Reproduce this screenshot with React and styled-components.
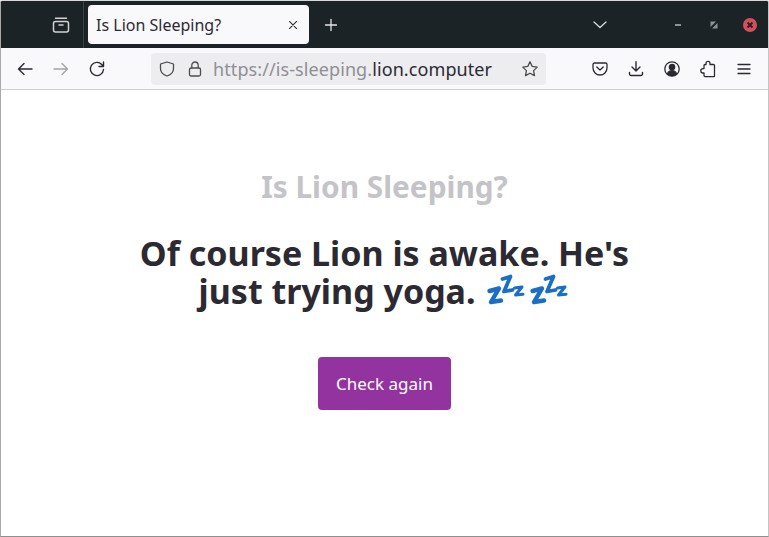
import React from "react";
import styled, { createGlobalStyle } from "styled-components";

const Global = createGlobalStyle`
  html, body { margin: 0; padding: 0; background: #fff; }
  body { font-family: "Noto Sans", "Open Sans", sans-serif; }
`;

const Win = styled.div`
  width: 769px; height: 537px; box-sizing: border-box; overflow: hidden;
  display: flex; flex-direction: column; background: #fff;
  border: 1px solid #a9a9a9; border-top-color: #d8d8d8; border-right-color: #c4c4c4; border-bottom-color: #8f8f8f;
  border-radius: 2px 2px 0 0;
`;
const TabBar = styled.div`
  height: 47px; flex: none; background: #1c2326; display: flex; align-items: center; color: #fbfbfe;
`;
const ArchiveSlot = styled.div`
  width: 83px; height: 100%; box-sizing: border-box; border-right: 1px solid #3b4245;
  display: flex; align-items: center; justify-content: flex-end; padding-right: 13px; flex: none; color: #d0d2d3;
`;
const Tab = styled.div`
  margin-left: 4px; width: 221px; height: 39px; background: #f9f9fb; border-radius: 4px; flex: none;
  display: flex; align-items: center; justify-content: space-between; box-sizing: border-box;
  padding: 0 8px; color: #2b2a33; font-size: 16px;
`;
const TabTitle = styled.span` line-height: 22px; `;
const TabClose = styled.span` display: flex; color: #2b2a33; `;
const PlusSlot = styled.div` margin-left: 13px; display: flex; color: #e4e5e6; `;
const ListAll = styled.div` margin-left: 251px; display: flex; color: #d7d9da; `;
const WinControls = styled.div` margin-left: 61px; display: flex; gap: 20px; align-items: center; `;
const WinBtn = styled.div` width: 16px; height: 16px; display: flex; align-items: center; justify-content: center; `;

const ToolBar = styled.div`
  height: 42px; flex: none; box-sizing: border-box; background: #f9f9fb; border-bottom: 1px solid #cfcfd1;
  display: flex; align-items: center; padding: 0 6px; color: #2b2a33;
`;
const ToolBtn = styled.div`
  width: 36px; height: 32px; display: flex; align-items: center; justify-content: center; flex: none;
  color: ${p => (p.$dim ? "#a3a3a8" : "#2b2a33")};
`;
const UrlBar = styled.div`
  margin-left: 36px; width: 395px; height: 32px; flex: none; background: #ededef; border-radius: 4px;
  display: flex; align-items: center; box-sizing: border-box; padding: 0 7px 0 7px; color: #4c4b52;
`;
const UrlIcon = styled.span` display: flex; margin-right: ${p => p.$gap}px; `;
const UrlText = styled.span` flex: 1; font-size: 18px; letter-spacing: 0.09px; color: #8f8f94; white-space: nowrap; `;
const Host = styled.span` color: #2b2a33; `;
const RightTools = styled.div` margin-left: 36px; display: flex; `;

const Page = styled.main`
  flex: 1; display: flex; flex-direction: column; align-items: center; padding-top: 77px;
`;
const Eyebrow = styled.h2`
  margin: 0; font-size: 29.8px; line-height: 40px; font-weight: 700; color: #c4c4c8;
`;
const Headline = styled.h1`
  margin: 27px 0 0; width: 510px; text-align: center; font-size: 34px; line-height: 38px; font-weight: 700; color: #2b2a33;
`;
const Zzz = styled.svg`
  width: 43px; height: 38px; vertical-align: 0;
  margin: -10px 0 -4px 0;
`;
const CheckBtn = styled.button`
  margin-top: 47px; width: 133px; height: 53px; border: 0; border-radius: 4px; background: #93339f; color: #fff;
  font-family: inherit; font-size: 17px; padding: 0; line-height: 23px;
`;

const Ico = ({ children, size = 18, sw = 1.5 }) => (
  <svg width={size} height={size} viewBox="0 0 18 18" fill="none" stroke="currentColor" strokeWidth={sw} strokeLinecap="round" strokeLinejoin="round">
    {children}
  </svg>
);

const ZzzIcon = () => (
  <Zzz viewBox="0 0 43 38" fill="none" stroke="#1a6fc4" strokeLinejoin="round" strokeLinecap="round">
    <path d="M5.500 21 L15 18.500 L7 32 L17 30.500" strokeWidth="4.400" />
    <path d="M18.500 9 L26.500 6.500 L20 21.500 L28.500 20" strokeWidth="3.800" />
    <path d="M30.500 18 L38 17 L31.500 25 L39 24.200" strokeWidth="3" />
  </Zzz>
);

export default function App() {
  return (
    <>
      <Global />
      <Win>
        <TabBar>
          <ArchiveSlot>
            <Ico>
              <rect x="1.500" y="5.500" width="15" height="10.500" rx="2" />
              <path d="M3.500 2.200h11M7 9h4" />
            </Ico>
          </ArchiveSlot>
          <Tab>
            <TabTitle>Is Lion Sleeping?</TabTitle>
            <TabClose>
              <Ico size={16} sw={1.2}><path d="M5 5l8 8M13 5l-8 8" /></Ico>
            </TabClose>
          </Tab>
          <PlusSlot>
            <Ico sw={1.3}><path d="M9 3.500v11M3.500 9h11" /></Ico>
          </PlusSlot>
          <ListAll>
            <Ico sw={1.3}><path d="M3 6l6 5.500L15 6" /></Ico>
          </ListAll>
          <WinControls>
            <WinBtn>
              <svg width="8" height="4" viewBox="0 0 8 4"><rect x="1" y="1" width="6" height="2" fill="#8d9193" /></svg>
            </WinBtn>
            <WinBtn>
              <svg width="8" height="8" viewBox="0 0 8 8"><path d="M0.500 0.500H6L0.500 6zM7.500 7.500H2L7.500 2z" fill="#8f9294" /></svg>
            </WinBtn>
            <WinBtn>
              <svg width="16" height="16" viewBox="0 0 16 16">
                <circle cx="8" cy="8" r="7" fill="#d2505c" />
                <path d="M5.500 5.500l5 5M10.500 5.500l-5 5" stroke="#2a1d20" strokeWidth="1.800" />
              </svg>
            </WinBtn>
          </WinControls>
        </TabBar>
        <ToolBar>
          <ToolBtn><Ico sw={1.4}><path d="M16 9H2.500M8 3.500 2.500 9 8 14.500" /></Ico></ToolBtn>
          <ToolBtn $dim><Ico sw={1.4}><path d="M2 9h13.500M10 3.500 15.500 9 10 14.500" /></Ico></ToolBtn>
          <ToolBtn><Ico sw={1.4}><path d="M15.500 9.500A6.600 6.600 0 1 1 13.800 4.500L15.500 6.500M15.500 2v4.500H11" /></Ico></ToolBtn>
          <UrlBar>
            <UrlIcon $gap={10}>
              <Ico sw={1.3}><path d="M9 2 15.500 4v4.500c0 3.600-2.600 6.200-6.500 7.500-3.900-1.300-6.500-3.900-6.500-7.500V4z" /></Ico>
            </UrlIcon>
            <UrlIcon $gap={9}>
              <Ico sw={1.3}><rect x="3.500" y="8" width="11" height="8" rx="1.500" /><path d="M5.800 8V5.200a3.200 3.200 0 0 1 6.400 0V8" /></Ico>
            </UrlIcon>
            <UrlText>https://is-sleeping.<Host>lion.computer</Host></UrlText>
            <UrlIcon $gap={0}>
              <Ico sw={1.3}><path d="M9 1.800l2.200 4.600 5 .7-3.600 3.500.9 5L9 13.200l-4.500 2.400.9-5L1.800 7.100l5-.7z" /></Ico>
            </UrlIcon>
          </UrlBar>
          <RightTools>
            <ToolBtn><Ico sw={1.3}><path d="M3.500 3h11a1.500 1.500 0 0 1 1.500 1.500V8A7 7 0 0 1 2 8V4.500A1.500 1.500 0 0 1 3.500 3z" /><path d="M5.800 7 9 10l3.200-3" /></Ico></ToolBtn>
            <ToolBtn><Ico sw={1.4}><path d="M9 1.800V11M5 7l4 4 4-4M2.500 12.500v1.500a1.500 1.500 0 0 0 1.500 1.500h10a1.500 1.500 0 0 0 1.500-1.500v-1.500" /></Ico></ToolBtn>
            <ToolBtn>
              <Ico sw={1.3}>
                <circle cx="9" cy="9" r="7.200" />
                <circle cx="9" cy="7" r="2.700" fill="currentColor" />
                <path d="M4.500 13.500c1-2 2.600-2.800 4.500-2.800s3.500.8 4.500 2.800c-1.200 1.300-2.800 2-4.500 2s-3.300-.7-4.500-2z" fill="currentColor" />
              </Ico>
            </ToolBtn>
            <ToolBtn>
              <Ico sw={1.3}>
                <path d="M7 4.500V3.400a2 2 0 0 1 4 0v1.100h3.500a1 1 0 0 1 1 1V16a.6.600 0 0 1-.6.600H6a1 1 0 0 1-1-1V13H4a2.200 2.200 0 0 1 0-4.400h1V5.500a1 1 0 0 1 1-1z" />
              </Ico>
            </ToolBtn>
            <ToolBtn><Ico sw={1.3}><path d="M3 4.500h12M3 9h12M3 13.500h12" /></Ico></ToolBtn>
          </RightTools>
        </ToolBar>
        <Page>
          <Eyebrow>Is Lion Sleeping?</Eyebrow>
          <Headline>
            Of course Lion is awake. He's just trying yoga. <ZzzIcon /><ZzzIcon />
          </Headline>
          <CheckBtn>Check again</CheckBtn>
        </Page>
      </Win>
    </>
  );
}
